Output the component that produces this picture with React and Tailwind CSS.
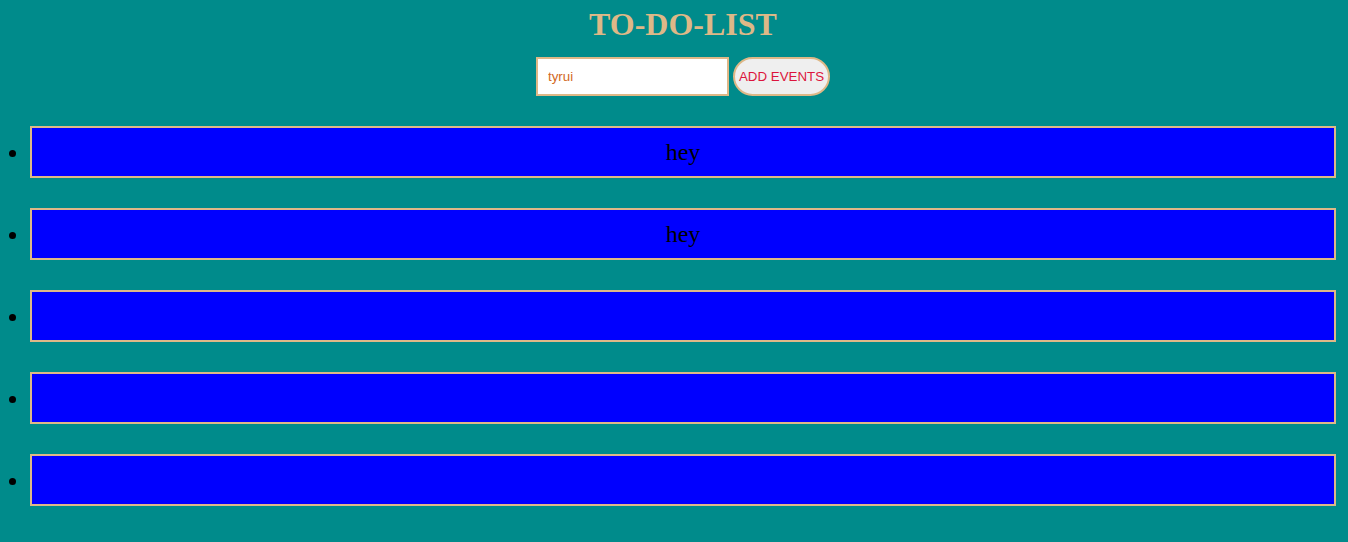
import React, { useState } from 'react';

function App() {
  const [text, setText] = useState('tyrui');
  const [items] = useState(['hey', 'hey', '', '', '']);

  return (
    <div className="min-h-[542px] bg-[#008b8b] pl-[30px] pr-[12px] pb-[36px] font-['Liberation_Serif',serif]">
      <h1 className="pt-[6px] text-center text-[32px] font-bold leading-[36px] text-[#deb887]">TO-DO-LIST</h1>
      <div className="mt-[15px] flex justify-center gap-[4px]">
        <input
          type="text"
          value={text}
          onChange={(e) => setText(e.target.value)}
          className="h-[39px] w-[193px] border-2 border-[#deb887] bg-white px-[10px] font-['Liberation_Sans',sans-serif] text-[13.33px] text-[#d2691e] outline-none"
        />
        <button className="h-[39px] w-[97px] rounded-full border-2 border-[#deb887] bg-[#efefef] font-['Liberation_Sans',sans-serif] text-[13.33px] text-[#dc143c]">
          ADD EVENTS
        </button>
      </div>
      <ul className="mt-[30px] flex flex-col gap-[30px]">
        {items.map((item, i) => (
          <li key={i} className="relative">
            <span className="absolute left-[-21px] top-[24px] h-[7px] w-[7px] rounded-full bg-black"></span>
            <div className="flex h-[52px] items-center justify-center border-2 border-[#deb887] bg-[#0000ff] text-[24px] text-black">
              {item}
            </div>
          </li>
        ))}
      </ul>
    </div>
  );
}

export default App;
